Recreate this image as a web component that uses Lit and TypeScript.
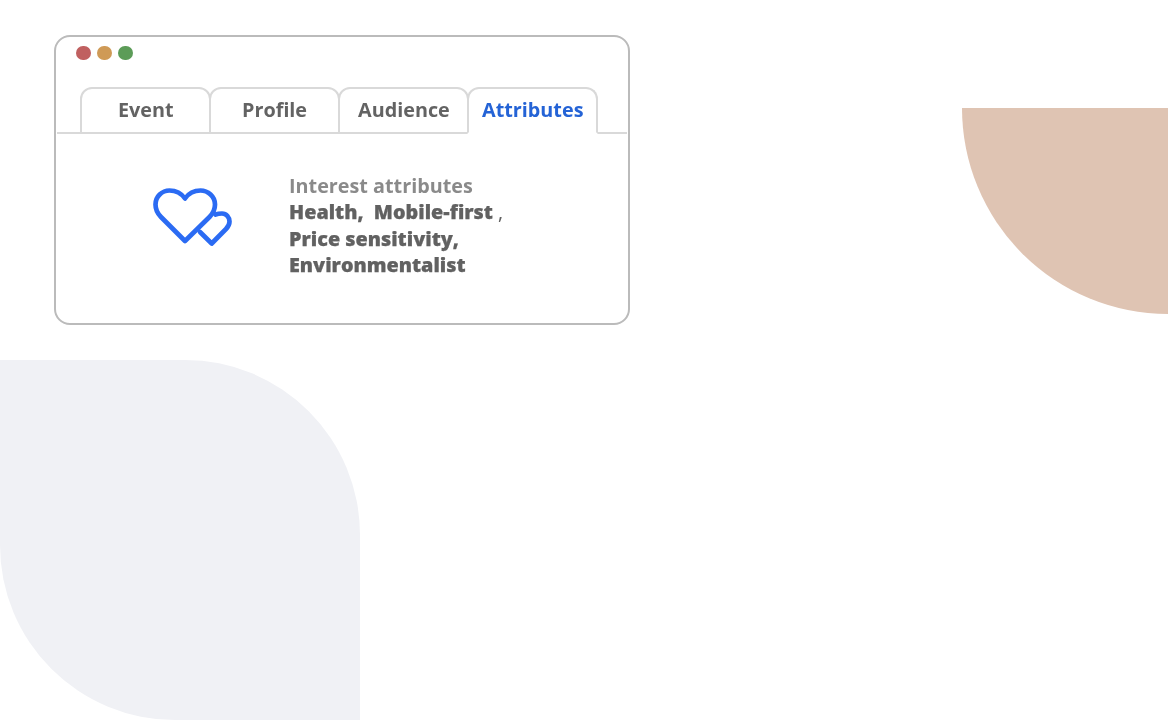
import { LitElement, html, css } from "lit";
import { customElement } from "lit/decorators.js";

@customElement("app-root")
export class AppRoot extends LitElement {
  static styles = css`
    :host {
      display: block;
      position: relative;
      width: 1168px;
      height: 720px;
      overflow: hidden;
      background: #fff;
      font-family: "Open Sans", "Noto Sans", sans-serif;
      padding-top: 35px;
      box-sizing: border-box;
    }
    .tan {
      position: absolute;
      left: 962px;
      top: 108px;
      width: 206px;
      height: 206px;
      background: #dfc4b3;
      border-bottom-left-radius: 206px;
    }
    .grey {
      position: absolute;
      left: 0;
      top: 360px;
      width: 360px;
      height: 360px;
      background: #f0f1f5;
      border-top-right-radius: 175px;
      border-bottom-left-radius: 175px;
    }
    .card {
      position: relative;
      box-sizing: border-box;
      margin-left: 54px;
      width: 576px;
      height: 290px;
      border: 2px solid #bbbbbb;
      border-radius: 16px;
      background: #fff;
    }
    .dots {
      display: flex;
      gap: 6.5px;
      padding: 8.5px 0 0 20px;
      height: 14.5px;
    }
    .dot {
      width: 14.5px;
      height: 14.5px;
      border-radius: 50%;
    }
    .r { background: #c06060; }
    .y { background: #cf9a56; }
    .g { background: #5c9c58; }
    .tabs {
      display: flex;
      margin: 27px 1px 0;
      padding-left: 23px;
      height: 47px;
      box-sizing: border-box;
      border-bottom: 2px solid #d9d9d9;
    }
    .tab {
      box-sizing: border-box;
      width: 131px;
      height: 47px;
      margin-right: -2px;
      flex: none;
      border: 2px solid #d9d9d9;
      border-radius: 12px 12px 0 0;
      display: flex;
      align-items: center;
      justify-content: center;
      padding-bottom: 2px;
      font-size: 19.8px;
      font-weight: 700;
      color: #636363;
      white-space: nowrap;
    }
    .tab span {
      will-change: transform;
    }
    .tab.active {
      width: 130.5px;
      color: #2463d6;
      background: #fff;
      border-bottom-color: #fff;
    }
    .body {
      display: flex;
      align-items: flex-start;
      padding: 39px 0 0 84px;
    }
    svg {
      display: block;
      width: 110px;
      height: 90px;
      margin-top: -2px;
      flex: none;
    }
    .text {
      margin-left: 38.6px;
      font-size: 19.8px;
      line-height: 26.3px;
      color: #616161;
      width: 260px;
      will-change: transform;
    }
    .label {
      font-weight: 700;
      color: #8a8a8a;
    }
    .val {
      font-weight: 800;
      -webkit-text-stroke: 0.25px #616161;
    }
    .thin {
      font-weight: 400;
      -webkit-text-stroke: 0;
    }
  `;

  render() {
    return html`
      <div class="tan"></div>
      <div class="grey"></div>
      <div class="card">
        <div class="dots">
          <span class="dot r"></span><span class="dot y"></span><span class="dot g"></span>
        </div>
        <div class="tabs">
          <div class="tab"><span>Event</span></div>
          <div class="tab"><span>Profile</span></div>
          <div class="tab"><span>Audience</span></div>
          <div class="tab active"><span>Attributes</span></div>
        </div>
        <div class="body">
          <svg viewBox="0 0 110 90" fill="none" stroke="#2b6bf3" stroke-width="4.7" stroke-linejoin="round" stroke-linecap="round">
            <path d="M45 70 L21 46 C17.5 42.5 15.5 38 15.5 33.5 C15.5 25.5 22 19.5 29.5 19.5 C36 19.5 41.5 22.5 45 27.5 C48.5 22.5 54 19.5 60.5 19.5 C68 19.5 75 25.5 75 33.5 C75 38 73 42.5 69.5 46 Z" />
            <path d="M75.5 43.5 C77.5 42.8 79.5 42.5 82 42.5 C86.5 42.5 89.5 46.5 89.5 50.5 C89.5 53.5 88 56 86 58 L71.7 72.5 L60 61" />
          </svg>
          <div class="text">
            <div class="label">Interest attributes</div>
            <div class="val">Health,&nbsp; Mobile-first <span class="thin">,</span></div>
            <div class="val">Price sensitivity,</div>
            <div class="val">Environmentalist</div>
          </div>
        </div>
      </div>
    `;
  }
}
